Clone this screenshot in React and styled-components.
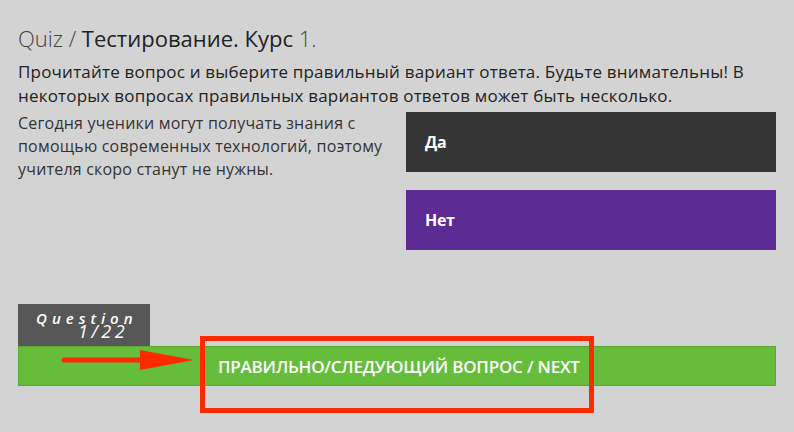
import React from "react";
import styled, { createGlobalStyle } from "styled-components";

const GlobalStyle = createGlobalStyle`
  html, body {
    margin: 0;
    padding: 0;
    background: #d3d3d3;
  }
  body {
    font-family: "Open Sans", "Liberation Sans", sans-serif;
    color: #333;
  }
`;

const Page = styled.div`
  position: relative;
  width: 794px;
  height: 432px;
  box-sizing: border-box;
  padding: 22px 18px 0 18px;
  overflow: hidden;
`;

const Title = styled.h1`
  margin: 0;
  font-size: 22px;
  line-height: 32px;
  font-weight: 300;
  color: #444;
`;

const Strong = styled.span`
  font-weight: 400;
  color: #222;
`;

const Intro = styled.p`
  margin: 6px 0 0 0;
  font-size: 17px;
  line-height: 24px;
  letter-spacing: 0.2px;
  color: #222;
  width: 750px;
`;

const QuestionRow = styled.div`
  display: grid;
  grid-template-columns: 388px 370px;
  margin-top: 4px;
`;

const QuestionText = styled.p`
  margin: 0;
  font-size: 16px;
  line-height: 23px;
  letter-spacing: 0.2px;
  color: #333;
  width: 370px;
`;

const Answers = styled.div`
  display: flex;
  flex-direction: column;
  gap: 18px;
`;

const Answer = styled.button`
  height: 60px;
  border: none;
  padding: 0 19px;
  text-align: left;
  background: ${(p) => p.bg};
  color: #fff;
  font-family: "Open Sans", "Liberation Sans", sans-serif;
  font-weight: 700;
  font-size: 16px;
  letter-spacing: -0.3px;
`;

const Footer = styled.div`
  margin-top: 54px;
  display: flex;
  flex-direction: column;
`;

const Tag = styled.div`
  width: 132px;
  height: 42px;
  background: #575757;
  color: #fff;
  font-style: italic;
  font-size: 15px;
  line-height: 13px;
  box-sizing: border-box;
  padding: 8px 0 0 18px;
`;

const TagWord = styled.div`
  letter-spacing: 5px;
  font-weight: 600;
`;

const TagNum = styled.div`
  padding-left: 42px;
  letter-spacing: 3.5px;
  font-weight: 400;
  font-size: 18px;
`;

const NextBar = styled.button`
  height: 40px;
  width: 758px;
  background: #66bd3c;
  border: 1px solid #58a832;
  text-align: left;
  padding: 0 0 0 199px;
  color: #fff;
  font-family: "Open Sans", "Liberation Sans", sans-serif;
  font-size: 17px;
  font-weight: 600;
  letter-spacing: -0.2px;
`;

const Highlight = styled.div`
  position: absolute;
  left: 200px;
  top: 336px;
  width: 384px;
  height: 67px;
  border: 5px solid #ff2a00;
`;

const Arrow = styled.svg`
  position: absolute;
  left: 58px;
  top: 348px;
`;

export default function App() {
  return (
    <Page>
      <GlobalStyle />
      <Title>
        Quiz / <Strong>Тестирование. Курс</Strong> 1.
      </Title>
      <Intro>
        Прочитайте вопрос и выберите правильный вариант ответа. Будьте
        внимательны! В некоторых вопросах правильных вариантов ответов может
        быть несколько.
      </Intro>
      <QuestionRow>
        <QuestionText>
          Сегодня ученики могут получать знания с помощью современных
          технологий, поэтому учителя скоро станут не нужны.
        </QuestionText>
        <Answers>
          <Answer bg="#353535">Да</Answer>
          <Answer bg="#5c2a93">Нет</Answer>
        </Answers>
      </QuestionRow>
      <Footer>
        <Tag>
          <TagWord>Question</TagWord>
          <TagNum>1/22</TagNum>
        </Tag>
        <NextBar>ПРАВИЛЬНО/СЛЕДУЮЩИЙ ВОПРОС / NEXT</NextBar>
      </Footer>
      <Highlight />
      <Arrow width="140" height="26" viewBox="0 0 140 26">
        <line x1="6" y1="12" x2="90" y2="12" stroke="#ff2a00" strokeWidth="5" strokeLinecap="round" />
        <polygon points="82,2 136,12 82,22" fill="#ff2a00" />
      </Arrow>
    </Page>
  );
}
